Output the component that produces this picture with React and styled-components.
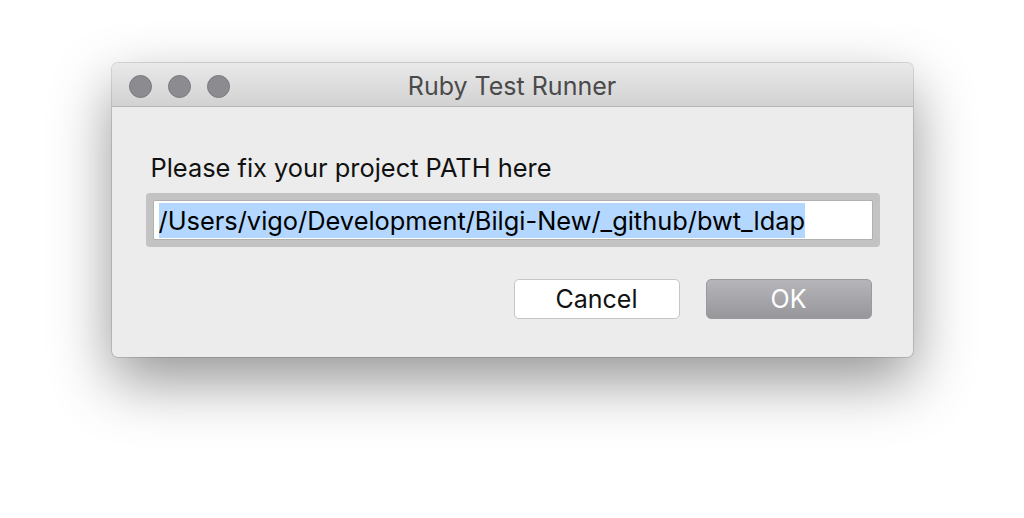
import React from 'react'
import styled, { createGlobalStyle } from 'styled-components'

const GlobalStyle = createGlobalStyle`
  html, body {
    margin: 0;
    padding: 0;
    background: #ffffff;
  }
  body {
    font-family: Inter, "Liberation Sans", Arial, sans-serif;
  }
`

function App() {
  return (
    <Page>
      <GlobalStyle />
      <Window>
        <TitleBar>
          <Lights>
            <Light />
            <Light />
            <Light />
          </Lights>
          <Title>Ruby Test Runner</Title>
        </TitleBar>
        <Content>
          <Label>Please fix your project PATH here</Label>
          <Field>
            <Selected>/Users/vigo/Development/Bilgi-New/_github/bwt_ldap</Selected>
          </Field>
          <Actions>
            <CancelBtn>Cancel</CancelBtn>
            <OkBtn>OK</OkBtn>
          </Actions>
        </Content>
      </Window>
    </Page>
  )
}

export default App

const Page = styled.div`
  width: 1024px;
  height: 518px;
  display: flex;
  justify-content: center;
  align-items: flex-start;
  padding-top: 63px;
  box-sizing: border-box;
  overflow: hidden;
`

const Window = styled.div`
  width: 801px;
  background: #ececec;
  border-radius: 6px;
  box-shadow: 0 24px 60px rgba(0, 0, 0, 0.42), 0 0 0 1px rgba(0, 0, 0, 0.13);
  overflow: hidden;
`

const TitleBar = styled.div`
  position: relative;
  height: 43px;
  display: flex;
  align-items: center;
  justify-content: center;
  background: linear-gradient(#e9e9e9, #d2d2d2);
  border-bottom: 1px solid #b4b4b4;
`

const Lights = styled.div`
  position: absolute;
  left: 17px;
  top: 12px;
  display: flex;
  gap: 16px;
`

const Light = styled.div`
  width: 23px;
  height: 23px;
  border-radius: 50%;
  background: #8c8c90;
  border: 1px solid #7a7a7e;
  box-sizing: border-box;
`

const Title = styled.div`
  font-size: 25px;
  color: #4a4a4a;
  padding-top: 3px;
`

const Content = styled.div`
  padding: 46px 41px 38px 42px;
  display: flex;
  flex-direction: column;
`

const Label = styled.div`
  font-size: 25.4px;
  line-height: 30px;
  color: #111;
  margin-left: -3px;
`

const Field = styled.div`
  margin-top: 18px;
  height: 38px;
  background: #ffffff;
  border-radius: 1px;
  box-shadow: 0 0 0 1px #b0b0b0, 0 0 0 8px #c3c3c3;
  display: flex;
  align-items: center;
  padding-left: 5px;
`

const Selected = styled.span`
  background: #b3d7ff;
  font-size: 25.4px;
  line-height: 35px;
  color: #000;
`

const Actions = styled.div`
  margin-top: 40px;
  display: flex;
  justify-content: flex-end;
  gap: 26px;
`

const CancelBtn = styled.div`
  width: 166px;
  height: 40px;
  box-sizing: border-box;
  display: flex;
  align-items: center;
  justify-content: center;
  background: #ffffff;
  border: 1px solid #c6c6c6;
  border-radius: 5px;
  font-size: 25px;
  color: #111;
`

const OkBtn = styled(CancelBtn)`
  background: linear-gradient(#b6b6ba, #97979b);
  border-color: #9a9a9e;
  color: #ffffff;
`
